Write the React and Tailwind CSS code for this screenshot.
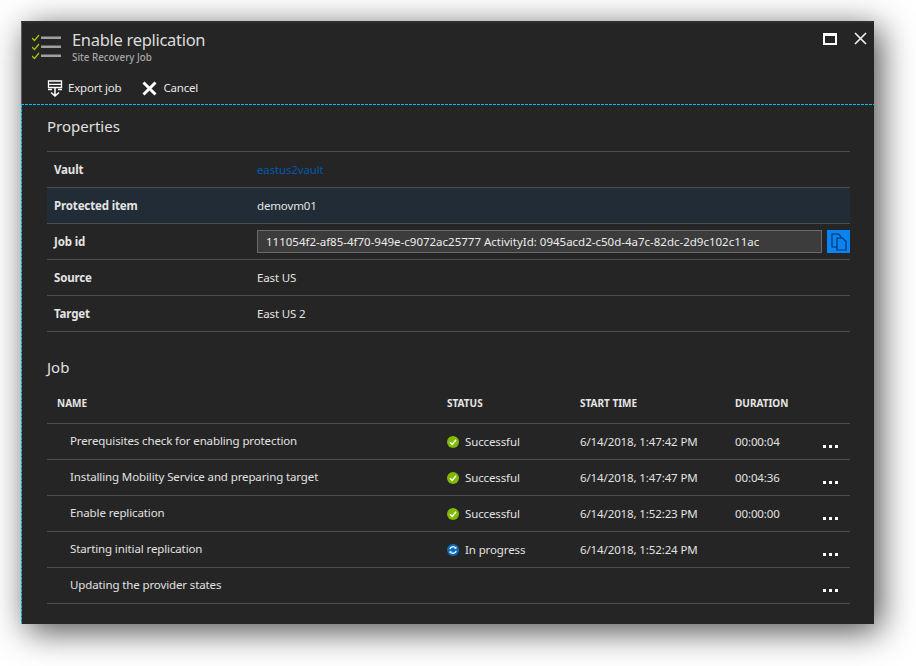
const F = "font-['Noto_Sans',sans-serif]";

function Check() {
  return (
    <svg width="12" height="12" viewBox="0 0 12 12" className="shrink-0">
      <circle cx="6" cy="6" r="6" fill="#7fb900" />
      <path d="M3 6.200 5.200 8.400 9 3.800" fill="none" stroke="#fff" strokeWidth="1.400" />
    </svg>
  );
}

function Sync() {
  return (
    <svg width="12" height="12" viewBox="0 0 12 12" className="shrink-0">
      <circle cx="6" cy="6" r="6" fill="#0f6cbd" />
      <path d="M2.800 5.200A3.300 3.300 0 0 1 8.600 4M9.200 6.800A3.300 3.300 0 0 1 3.400 8" fill="none" stroke="#fff" strokeWidth="1.200" />
      <path d="M9.400 2.400V4.800H7ZM2.600 9.600V7.200H5Z" fill="#fff" />
    </svg>
  );
}

function Dots() {
  return (
    <div className="flex gap-[3px] w-[15px] mt-[10px]">
      <span className="w-[3px] h-[3px] bg-white" />
      <span className="w-[3px] h-[3px] bg-white" />
      <span className="w-[3px] h-[3px] bg-white" />
    </div>
  );
}

const props = [
  { k: "Vault", v: "eastus2vault", cls: "text-[#0058ad]" },
  { k: "Protected item", v: "demovm01", hi: true },
  { k: "Job id", input: true },
  { k: "Source", v: "East US" },
  { k: "Target", v: "East US 2" },
];

const jobs = [
  { n: "Prerequisites check for enabling protection", s: "Successful", t: "6/14/2018, 1:47:42 PM", d: "00:00:04" },
  { n: "Installing Mobility Service and preparing target", s: "Successful", t: "6/14/2018, 1:47:47 PM", d: "00:04:36" },
  { n: "Enable replication", s: "Successful", t: "6/14/2018, 1:52:23 PM", d: "00:00:00" },
  { n: "Starting initial replication", s: "In progress", t: "6/14/2018, 1:52:24 PM", d: "", sync: true },
  { n: "Updating the provider states", s: "", t: "", d: "" },
];

export default function App() {
  return (
    <div className={`${F} w-[916px] h-[666px] bg-white pt-[21px] pl-[21px] overflow-hidden`}>
      <div className="w-[853px] h-[603px] bg-[#252525] text-[#e6e6e6] shadow-[6px_7px_32px_rgba(0,0,0,0.7)] flex flex-col">
        {/* Header */}
        <div className="h-[83px] shrink-0 flex flex-col border-l border-[#5c5c5c] border-t-2 border-t-[#2e2e2e]">
          <div className="h-[46px] flex items-start pl-[10px] pr-[7px]">
            <svg width="32" height="28" viewBox="0 0 32 28" className="mt-[11px] shrink-0">
              <g fill="none" stroke="#a4c400" strokeWidth="1.300">
                <path d="M0 4 2.500 6.500 7 1" />
                <path d="M0 13 2.500 15.500 7 10" />
                <path d="M0 22 2.500 24.500 7 19" />
              </g>
              <g fill="#a0a0a0">
                <rect x="9" y="2.500" width="20" height="2.500" />
                <rect x="9" y="11.500" width="20" height="2.500" />
                <rect x="9" y="20.500" width="20" height="2.500" />
              </g>
            </svg>
            <div className="ml-[8px] mt-[5px] flex flex-col">
              <span className="text-[16.500px] leading-[24px] text-[#dcdcdc] tracking-[-0.3px]">Enable replication</span>
              <span className="text-[9.800px] leading-[12px] text-[#a6a6a6] font-medium">Site Recovery Job</span>
            </div>
            <div className="ml-auto flex items-center gap-[17px] mt-[9px]">
              <div className="w-[14px] h-[12px] border-2 border-white border-t-[3px]" />
              <svg width="13" height="13" viewBox="0 0 13 13">
                <path d="M1 1 12 12M12 1 1 12" stroke="#f0f0f0" strokeWidth="1.700" />
              </svg>
            </div>
          </div>
          <div className="flex items-center pl-[25px] h-[35px] pt-[3px] text-[11.500px] text-[#e8e8e8] tracking-[-0.2px]">
            <svg width="16" height="17" viewBox="0 0 16 17" className="mr-[5px]">
              <path d="M1.500 1h13v6.500h-13zM1.500 4.300h13" fill="none" stroke="#fff" strokeWidth="1.300" />
              <path d="M8 8v8M4 12.500 8 16 12 12.500M1 9.500h4M11 9.500h4" fill="none" stroke="#fff" strokeWidth="1.500" />
            </svg>
            <span>Export job</span>
            <svg width="15" height="15" viewBox="0 0 15 15" className="ml-[21px] mr-[6px]">
              <path d="M1.500 1.500 13.500 13.500M13.500 1.500 1.500 13.500" stroke="#fff" strokeWidth="3" />
            </svg>
            <span>Cancel</span>
          </div>
        </div>
        <div className="h-px shrink-0 bg-[repeating-linear-gradient(90deg,#00bcf2_0,#00bcf2_3px,transparent_3px,transparent_4px)]" />

        {/* Body */}
        <div className="flex-1 flex">
          <div className="w-px shrink-0 bg-[repeating-linear-gradient(180deg,#00bcf2_0,#00bcf2_3px,#555_3px,#555_4px)]" />
          <div className="flex-1 pl-[25px] pr-[24px]">
            <h2 className="text-[15px] leading-[20px] mt-[11px] mb-[15px] text-[#e0e0e0] font-normal">Properties</h2>
            <div className="border-t border-[#4e4e4e]">
              {props.map((p) => (
                <div key={p.k} className={`h-[36px] border-b border-[#4e4e4e] flex items-center text-[11.500px] ${p.hi ? "bg-[#212c36]" : ""}`}>
                  <span className="w-[210px] pl-[7px] font-bold text-[#e4e4e4] tracking-[-0.15px]">{p.k}</span>
                  {p.input ? (
                    <div className="flex items-center">
                      <div className="w-[565px] h-[23px] bg-[#3c3c3c] border border-[#6a6a6a] pl-[8px] flex items-center text-[#ececec] text-[11.500px] whitespace-nowrap">
                        111054f2-af85-4f70-949e-c9072ac25777 ActivityId: 0945acd2-c50d-4a7c-82dc-2d9c102c11ac
                      </div>
                      <div className="ml-[5px] w-[23px] h-[23px] bg-[#0a84f5] flex items-center justify-center">
                        <svg width="16" height="18" viewBox="0 0 16 18">
                          <path d="M1 1h6.500l2.500 2.500V14H1z" fill="none" stroke="#04305c" strokeWidth="1.100" />
                          <path d="M6 5h5.500L15 8.500V17H6z" fill="#0a84f5" stroke="#04305c" strokeWidth="1.100" />
                        </svg>
                      </div>
                    </div>
                  ) : (
                    <span className={`tracking-[-0.15px] ${p.cls || "text-[#e4e4e4]"}`}>{p.v}</span>
                  )}
                </div>
              ))}
            </div>

            <h2 className="text-[15px] leading-[20px] mt-[25px] text-[#e0e0e0] font-normal">Job</h2>
            <div className="h-[48px] pt-[7px] -mt-px grid grid-cols-[400px_133px_155px_115px] items-center text-[10px] font-bold text-[#e6e6e6] border-b border-[#4e4e4e]">
              <span className="pl-[10px]">NAME</span>
              <span>STATUS</span>
              <span>START TIME</span>
              <span>DURATION</span>
            </div>
            {jobs.map((j) => (
              <div key={j.n} className="h-[36px] border-b border-[#4e4e4e] grid grid-cols-[400px_133px_155px_88px_27px] items-center text-[11.500px] text-[#e2e2e2] tracking-[-0.12px]">
                <span className="pl-[23px] whitespace-nowrap -mt-[1px]">{j.n}</span>
                <span className="flex items-center gap-[6px] whitespace-nowrap">
                  {j.s && (j.sync ? <Sync /> : <Check />)}
                  <span className="mt-[1px]">{j.s}</span>
                </span>
                <span className="whitespace-nowrap">{j.t}</span>
                <span>{j.d}</span>
                <Dots />
              </div>
            ))}
          </div>
        </div>
      </div>
    </div>
  );
}
